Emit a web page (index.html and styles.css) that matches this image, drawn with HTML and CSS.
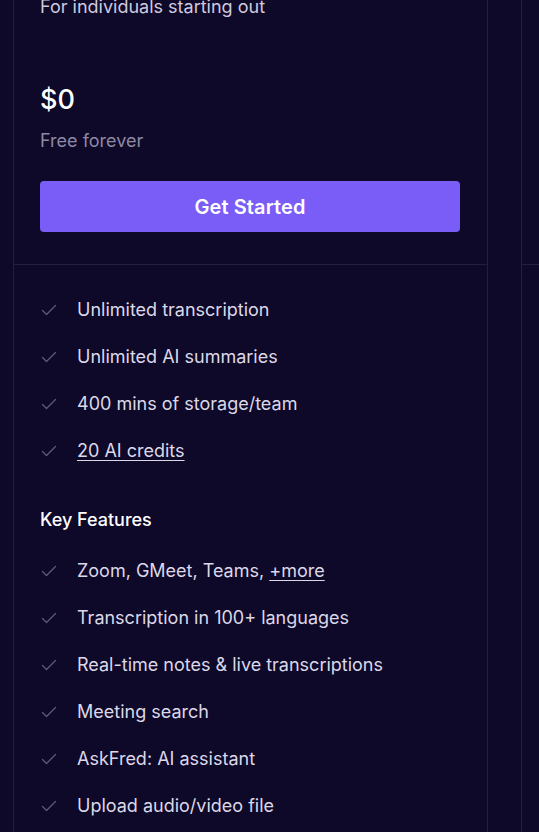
FILE: index.html
```html
<!DOCTYPE html>
<html lang="en">
<head>
<meta charset="UTF-8" />
<meta name="viewport" content="width=device-width, initial-scale=1" />
<title>Pricing</title>
<link rel="stylesheet" href="styles.css">
</head>
<body>

<div class="plans">
  <div class="plan">
    <div class="plan-head">
      <p class="plan-sub">For individuals starting out</p>
      <div class="price">$0</div>
      <p class="price-note">Free forever</p>
      <button class="cta">Get Started</button>
    </div>
    <div class="plan-body">
      <ul class="feats">
        <li><svg class="tick" viewBox="0 0 16 12"><polyline points="1.5,6.5 5.5,10.5 14.5,1.5" /></svg><span>Unlimited transcription</span></li>
        <li><svg class="tick" viewBox="0 0 16 12"><polyline points="1.5,6.5 5.5,10.5 14.5,1.5" /></svg><span>Unlimited AI summaries</span></li>
        <li><svg class="tick" viewBox="0 0 16 12"><polyline points="1.5,6.5 5.5,10.5 14.5,1.5" /></svg><span>400 mins of storage/team</span></li>
        <li><svg class="tick" viewBox="0 0 16 12"><polyline points="1.5,6.5 5.5,10.5 14.5,1.5" /></svg><a href="#">20 AI credits</a></li>
      </ul>
      <h3 class="feats-title">Key Features</h3>
      <ul class="feats">
        <li><svg class="tick" viewBox="0 0 16 12"><polyline points="1.5,6.5 5.5,10.5 14.5,1.5" /></svg><span>Zoom, GMeet, Teams, <a href="#">+more</a></span></li>
        <li><svg class="tick" viewBox="0 0 16 12"><polyline points="1.5,6.5 5.5,10.5 14.5,1.5" /></svg><span>Transcription in 100+ languages</span></li>
        <li><svg class="tick" viewBox="0 0 16 12"><polyline points="1.5,6.5 5.5,10.5 14.5,1.5" /></svg><span>Real-time notes &amp; live transcriptions</span></li>
        <li><svg class="tick" viewBox="0 0 16 12"><polyline points="1.5,6.5 5.5,10.5 14.5,1.5" /></svg><span>Meeting search</span></li>
        <li><svg class="tick" viewBox="0 0 16 12"><polyline points="1.5,6.5 5.5,10.5 14.5,1.5" /></svg><span>AskFred: AI assistant</span></li>
        <li><svg class="tick" viewBox="0 0 16 12"><polyline points="1.5,6.5 5.5,10.5 14.5,1.5" /></svg><span>Upload audio/video file</span></li>
      </ul>
    </div>
  </div>
  <div class="plan plan-next">
    <div class="plan-head"></div>
  </div>
</div>

</body>
</html>
```

FILE: styles.css
```css
body {
  margin: 0;
  background: #0e0829;
  color: #e4e0ee;
  font-family: Inter, "Noto Sans", sans-serif;
  overflow: hidden;
}
.plans {
  display: flex;
  gap: 33px;
  padding-left: 13px;
  min-height: 832px;
}
.plan {
  flex: 0 0 475px;
  box-sizing: border-box;
  border-left: 1px solid #231d3f;
  border-right: 1px solid #231d3f;
  min-height: 832px;
}
.plan-next {
  flex: 0 0 200px;
}
.plan-next .plan-head {
  height: 264px;
  padding: 0;
}
.plan-head {
  padding: 0 27px 32px 26px;
  border-bottom: 1px solid #231d3f;
}
.plan-sub {
  margin: -5px 0 0;
  font-size: 18px;
  line-height: 24px;
  color: #cfcadd;
}
.price {
  margin-top: 64px;
  font-size: 27px;
  line-height: 34px;
  font-weight: 500;
  color: #fff;
}
.price-note {
  margin: 12px 0 0;
  font-size: 18px;
  line-height: 24px;
  color: #8e89a3;
}
.cta {
  display: block;
  width: 100%;
  height: 51px;
  margin-top: 28px;
  border: 0;
  border-radius: 4px;
  background: #7a5cf6;
  color: #fff;
  font-family: Inter, sans-serif;
  font-size: 20px;
  font-weight: 600;
  letter-spacing: 0.1px;
  cursor: pointer;
}
.plan-body {
  padding: 33px 27px 0 26px;
}
.feats {
  list-style: none;
  margin: 0;
  padding: 0;
  display: flex;
  flex-direction: column;
  gap: 23px;
}
.feats li {
  display: flex;
  align-items: center;
  gap: 20px;
  font-size: 18px;
  line-height: 24px;
  color: #dcd8e8;
}
.feats a {
  color: #dcd8e8;
  text-decoration: underline;
  text-underline-offset: 3px;
}
.tick {
  width: 16px;
  height: 12px;
  margin-left: 1px;
  flex: none;
}
.tick polyline {
  fill: none;
  stroke: #5e5977;
  stroke-width: 1.3;
  stroke-linecap: round;
  stroke-linejoin: round;
}
.feats-title {
  margin: 45px 0 27px;
  font-size: 18px;
  line-height: 24px;
  font-weight: 500;
  color: #fff;
}
```
